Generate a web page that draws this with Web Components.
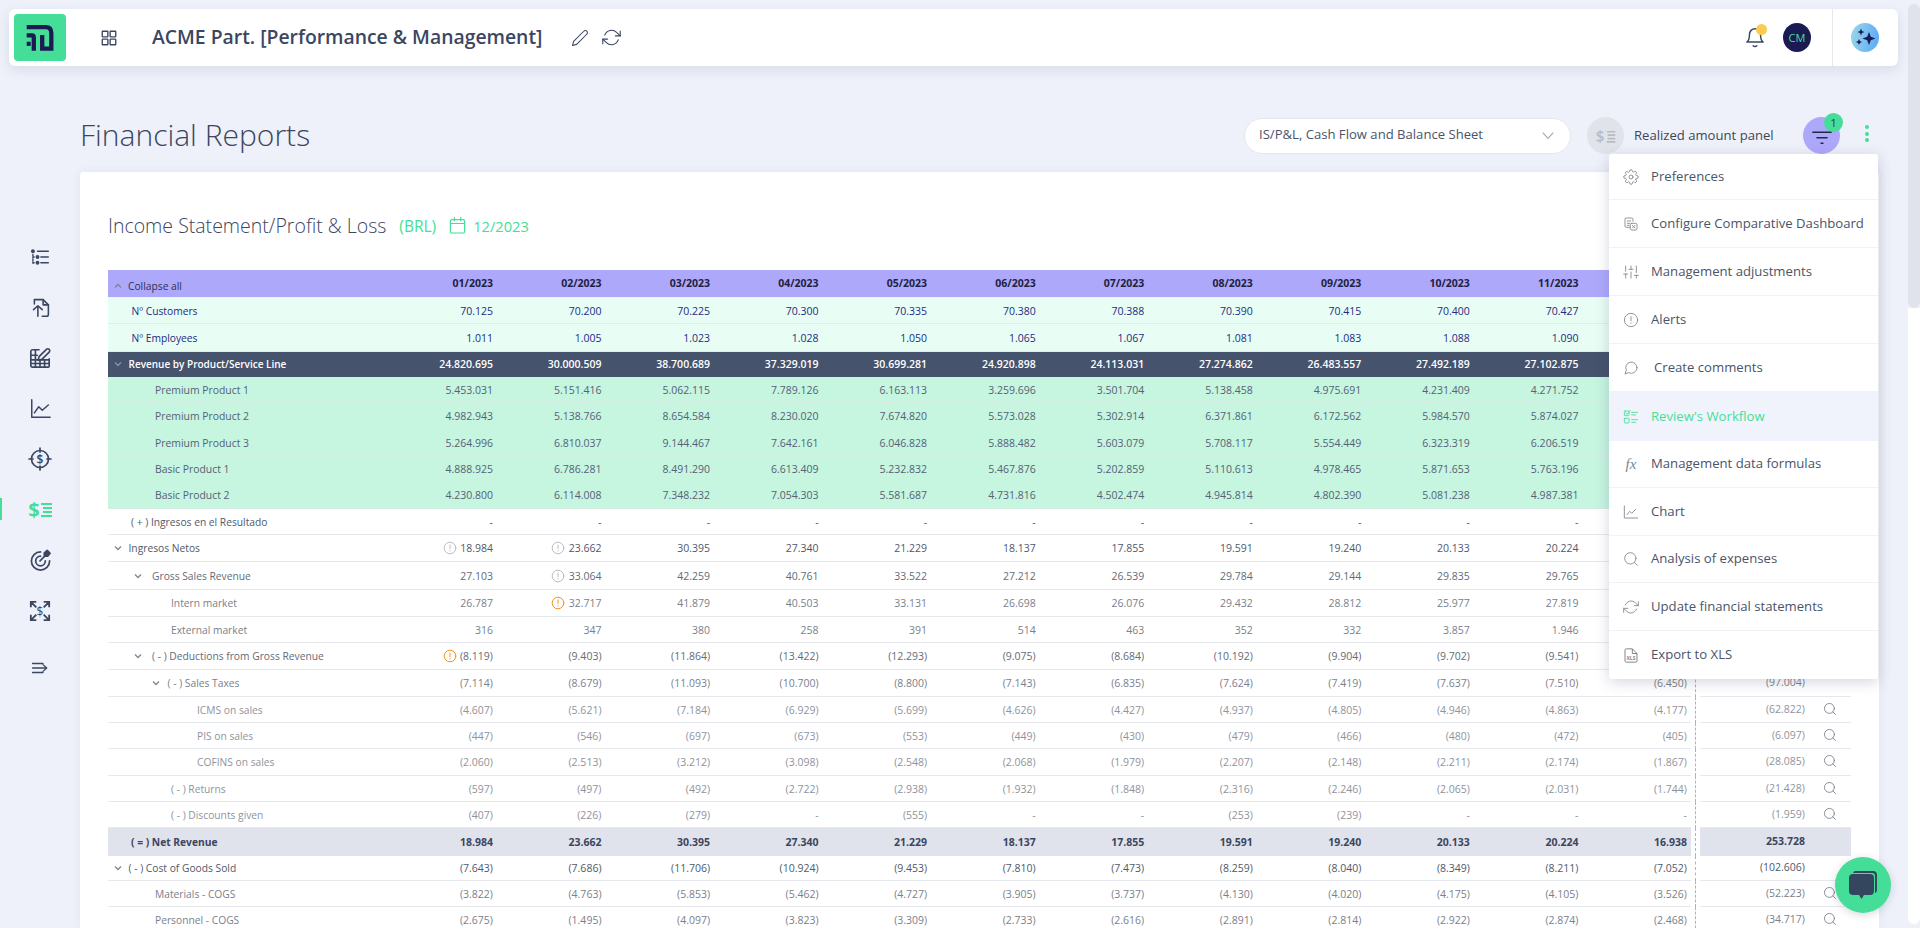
<!DOCTYPE html>
<html>
<head>
<meta charset="utf-8">
<title>Financial Reports</title>
<style>
  html, body { margin: 0; height: 100%; overflow: hidden; }
  body { background: #eef1f9; display: flex; font-family: "Open Sans", "Noto Sans", sans-serif; color: #3b4660; }
  #wrap { flex: 1; min-width: 0; display: flex; flex-direction: column; }
  #below { flex: 1; display: flex; min-height: 0; }
</style>
</head>
<body>
<div id="wrap">
  <app-header title-text="ACME Part. [Performance &amp; Management]"></app-header>
  <div id="below">
    <side-nav></side-nav>
    <report-page></report-page>
  </div>
</div>
<fake-scrollbar></fake-scrollbar>
<chat-fab></chat-fab>

<script>
const ICONS = {
    grid: '<rect x="3" y="3" width="7.5" height="7.5" rx=".8"/><rect x="13.5" y="3" width="7.5" height="7.5" rx=".8"/><rect x="3" y="13.5" width="7.5" height="7.5" rx=".8"/><rect x="13.5" y="13.5" width="7.5" height="7.5" rx=".8"/>',
    pencil: '<path d="M17 3a2.83 2.83 0 1 1 4 4L7.5 20.5 2 22l1.5-5.5L17 3z"/>',
    refresh: '<path d="M23 4v6h-6M1 20v-6h6"/><path d="M3.5 9a9 9 0 0 1 14.9-3.4L23 10M1 14l4.6 4.4A9 9 0 0 0 20.5 15"/>',
    bell: '<path d="M18 9A6 6 0 0 0 6 9c0 7-3 8.500-3 8.500h18s-3-1.500-3-8.500"/><path d="M10 21.500c1 1.200 3 1.200 4 0"/>',
    gear: '<circle cx="12" cy="12" r="3"/><path d="M19.4 15a1.65 1.65 0 0 0 .33 1.82l.06.06a2 2 0 0 1-2.83 2.83l-.06-.06a1.65 1.65 0 0 0-2.82 1.18V21a2 2 0 0 1-4 0v-.09a1.65 1.65 0 0 0-2.82-1.18l-.06.06a2 2 0 0 1-2.83-2.83l.06-.06A1.65 1.65 0 0 0 3.09 14H3a2 2 0 0 1 0-4h.09a1.65 1.65 0 0 0 1.18-2.82l-.06-.06a2 2 0 0 1 2.83-2.83l.06.06A1.65 1.65 0 0 0 10 3.09V3a2 2 0 0 1 4 0v.09a1.65 1.65 0 0 0 2.82 1.18l.06-.06a2 2 0 0 1 2.83 2.83l-.06.06A1.65 1.65 0 0 0 20.91 10H21a2 2 0 0 1 0 4h-.09a1.65 1.65 0 0 0-1.51 1z"/>',
    compare: '<path d="M15 8V5a2 2 0 0 0-2-2H5a2 2 0 0 0-2 2v10a2 2 0 0 0 2 2h5"/><path d="M6.500 7.500h5M6.500 11h3.500M6.500 14h2.500"/><rect x="11" y="11" width="10" height="10" rx="2"/><path d="M14 14l4 4M18 14l-4 4"/>',
    sliders: '<path d="M4 21v-6M4 11V3M12 21v-9M12 8V3M20 21v-4M20 13V3M1 15h6M9 8h6M17 17h6"/>',
    alert: '<circle cx="12" cy="12" r="10"/><path d="M12 7v6"/><path d="M12 16.500v.5"/>',
    comment: '<path d="M21 11.500a8.400 8.400 0 0 1-12.300 7.400L3 21l2.100-5.700A8.400 8.400 0 1 1 21 11.500z"/>',
    workflow: '<rect x="2" y="3" width="7" height="7" rx="1"/><rect x="2" y="14" width="7" height="7" rx="1"/><path d="M4 6l2 2 5-6M13 5h9M13 9h6M13 16h9M13 20h6"/>',
    chart: '<path d="M2 3v18h20"/><path d="M6 16l4-5 3 3 6-6"/>',
    search: '<circle cx="11" cy="11" r="8.500"/><path d="M21.500 21.500l-4.500-4.500"/>',
    tree: '<path d="M9 5h13M13 12h9M13 19h9"/><circle cx="3.500" cy="5" r="1.500" fill="currentColor"/><circle cx="9" cy="12" r="1.500" fill="currentColor"/><circle cx="9" cy="19" r="1.500" fill="currentColor"/><path d="M3.500 9v11M3.500 12h2M3.500 19h2" stroke-dasharray="1.500 1.500"/>',
    upload: '<path d="M5 8V3h10l6 6v11a2 2 0 0 1-2 2h-5"/><path d="M15 3v6h6"/><path d="M9 22V10M4 14.500L9 10l5 4.500"/>',
    sheet: '<path d="M11 3H4a2 2 0 0 0-2 2v15a2 2 0 0 0 2 2h17a1 1 0 0 0 1-1v-8"/><path d="M2 9h7M2 14h20M2 18h20M7 3v19M12 14v8M17 14v8"/><path d="M19 2.500a2 2 0 0 1 3 3l-8 8-4 1 1-4 8-8z"/>',
    linechart: '<path d="M2 2v20h21"/><path d="M5 17l5-7 4 4 7-6"/>',
    export: '<path d="M14 2H5a2 2 0 0 0-2 2v16a2 2 0 0 0 2 2h14a2 2 0 0 0 2-2V9l-7-7z"/><path d="M14 2v7h7"/>',
    target: '<circle cx="12" cy="12" r="8.500"/><path d="M12 1v4M12 19v4M1 12h4M19 12h4"/>',
    dart: '<path d="M12 3a9.500 9.500 0 1 0 9.500 9.500"/><path d="M12 7.500a5 5 0 1 0 5 5"/><path d="M11.500 12.500L18 6"/><path d="M16 4l3-2.500 3 3-2.500 3H16z" fill="currentColor"/>',
    expand: '<path d="M2 2l6 6M2 8V2h6M22 2l-6 6M22 8V2h-6M2 22l6-6M2 16v6h6M22 22l-6-6M22 16v6h-6"/>',
    collapse: '<path d="M2 6h14M2 12h18M2 18h14"/><path d="M16 7.500l5 4.500-5 4.500"/>',
    cal: '<rect x="3" y="4.500" width="18" height="17" rx="2"/><path d="M3 9.500h18M8 2v4M16 2v4"/>'
};

function icon(name, size, sw) {
    return `<svg width="${size}" height="${size}" viewBox="0 0 24 24" fill="none" stroke="currentColor" stroke-width="${sw || 1.5}" stroke-linecap="round" stroke-linejoin="round">${ICONS[name]}</svg>`;
}

class AppHeader extends HTMLElement {
    connectedCallback() {
        this.attachShadow({ mode: 'open' });
        this.shadowRoot.innerHTML = `
  <style>
    :host { display: flex; align-items: center; height: 57px; margin: 9px 9px 0; background: #fff; border-radius: 6px; box-shadow: 0 4px 12px rgba(60, 70, 110, 0.12); position: relative; z-index: 2; flex: none; color: #3b4660; }
    svg { display: block; }
    .logo { width: 52px; height: 47px; margin-left: 5px; background: #45de98; border-radius: 4px; flex: none; }
    .grid { margin-left: 34px; }
    h1 { margin: 0 0 2px 34px; font: 600 19.350px "Open Sans", sans-serif; color: #3b4660; white-space: nowrap; }
    .pencil { margin-left: 29px; }
    .sync { margin-left: 13px; }
    .right { margin-left: auto; display: flex; align-items: center; height: 100%; }
    .bell { position: relative; width: 22px; height: 24px; }
    .bell i { position: absolute; left: 12px; top: -2px; width: 11px; height: 11px; border-radius: 50%; background: #fdc94f; }
    .av { width: 28px; height: 29px; border-radius: 50%; background: #1c1a52; color: #45de98; font: 11px "Open Sans", sans-serif; display: flex; align-items: center; justify-content: center; margin-left: 17px; }
    .sep { width: 1px; height: 100%; background: #e6e8ee; margin-left: 21px; }
    .spark { width: 28px; height: 29px; border-radius: 50%; background: linear-gradient(100deg, #9bd8e6, #5aa7fa); margin: 0 19px 0 18px; }
  </style>
  <div class="logo">
    <svg width="52" height="47" viewBox="0 0 52 47" fill="none" stroke="#1c1a52" stroke-width="4.300">
      <path d="M12.700 13.200H32Q37.300 13.200 37.300 19V34.700H28.200V21"/>
      <path d="M12.700 21.300H18Q19.800 21.300 19.800 23.500V36.700"/>
      <path d="M12.700 29.800H16.700" stroke-width="4.200"/>
    </svg>
  </div>
  <div class="grid">${icon('grid', 18, 1.8)}</div>
  <h1>${this.getAttribute('title-text').replace('&', '&amp;')}</h1>
  <div class="pencil">${icon('pencil', 18, 1.4)}</div>
  <div class="sync">${icon('refresh', 19, 1.4)}</div>
  <div class="right">
    <div class="bell">${icon('bell', 22, 1.6)}<i></i></div>
    <div class="av">CM</div>
    <div class="sep"></div>
    <div class="spark">
      <svg width="28" height="29" viewBox="0 0 28 29" fill="#1c1a52"><path d="M18 9l1.800 4.700 4.700 1.800-4.700 1.800-1.800 4.700-1.800-4.700-4.700-1.800 4.700-1.800zM10 5.500l1 2.500 2.500 1-2.500 1-1 2.500-1-2.500-2.500-1 2.500-1zM8 16l.9 2.100 2.100.9-2.100.9-.9 2.100-.9-2.100-2.100-.9 2.100-.9z"/></svg>
    </div>
  </div>`;
    }
}
customElements.define('app-header', AppHeader);

class SideNav extends HTMLElement {
    connectedCallback() {
        this.attachShadow({ mode: 'open' });
        const money = `<span class="money">$</span><svg width="11" height="16" viewBox="0 0 11 16" fill="none" stroke="currentColor" stroke-width="2"><path d="M0 2h11M2 6h9M2 10h9M0 14h11"/></svg>`;
        const dollarTarget = `<svg width="24" height="24" viewBox="0 0 24 24" fill="none" stroke="currentColor" stroke-width="1.700" stroke-linecap="round">${ICONS.target}<text x="12" y="16.500" text-anchor="middle" font-family="Open Sans" font-size="12" font-weight="600" fill="currentColor" stroke="none">$</text></svg>`;
        const dollarExpand = `<svg width="22" height="22" viewBox="0 0 24 24" fill="none" stroke="currentColor" stroke-width="2">${ICONS.expand}<text x="12" y="17" text-anchor="middle" font-family="Open Sans" font-size="13" fill="currentColor" stroke="none">$</text></svg>`;
        this.shadowRoot.innerHTML = `
  <style>
    :host { display: flex; flex-direction: column; width: 80px; flex: none; padding-top: 165.500px; box-sizing: border-box; color: #3b4660; }
    .it { height: 50.600px; display: flex; align-items: center; justify-content: center; position: relative; flex: none; }
    .it.on { color: #45de98; gap: 1px; }
    .it.on::before { content: ""; position: absolute; left: 0; top: 14px; width: 2px; height: 22px; background: #45de98; }
    .it.last { margin-top: 6px; }
    .money { font: 700 20px/24px "Open Sans", sans-serif; }
    svg { display: block; }
  </style>
  <div class="it">${icon('tree', 20, 1.700)}</div>
  <div class="it">${icon('upload', 21, 1.800)}</div>
  <div class="it">${icon('sheet', 22, 1.800)}</div>
  <div class="it">${icon('linechart', 21, 1.700)}</div>
  <div class="it">${dollarTarget}</div>
  <div class="it on">${money}</div>
  <div class="it">${icon('dart', 23, 1.800)}</div>
  <div class="it">${dollarExpand}</div>
  <div class="it last">${icon('collapse', 18, 1.700)}</div>`;
    }
}
customElements.define('side-nav', SideNav);

class MoreMenu extends HTMLElement {
    connectedCallback() {
        this.attachShadow({ mode: 'open' });
        const fx = '<span class="fx">fx</span>';
        const xls = `<svg width="17" height="17" viewBox="0 0 24 24" fill="none" stroke="currentColor" stroke-width="1.500">${ICONS.export}<text x="12" y="18" text-anchor="middle" font-family="Open Sans" font-size="7.500" font-weight="700" fill="currentColor" stroke="none">XLS</text></svg>`;
        const items = [
            ['gear', 'Preferences', 46], ['compare', 'Configure Comparative Dashboard', 48], ['sliders', 'Management adjustments', 48],
            ['alert', 'Alerts', 48], ['comment', 'Create comments', 48], ['workflow', "Review's Workflow", 49],
            [fx, 'Management data formulas', 47], ['chart', 'Chart', 48], ['search', 'Analysis of expenses', 47],
            ['refresh', 'Update financial statements', 48], [xls, 'Export to XLS', 48]
        ];
        this.shadowRoot.innerHTML = `
  <style>
    :host { display: block; position: absolute; top: 100%; right: 1px; width: 269px; background: #fff; border-radius: 3px; box-shadow: 0 3px 14px rgba(60, 70, 110, 0.22); z-index: 5; font: 13.150px "Open Sans", sans-serif; color: #4a5469; }
    .row { display: flex; align-items: center; box-sizing: border-box; border-bottom: 1px solid #f0f2f8; padding-left: 14px; }
    .row:last-child { border-bottom: 0; }
    .row > span { padding-bottom: 2px; }
    .ic { width: 16px; height: 16px; color: #808591; display: flex; align-items: center; justify-content: center; margin-right: 12px; flex: none; }
    .on { background: #f0f3fb; color: #45de98; border-bottom: 0; }
    .on .ic { color: #45de98; }
    .shift { margin-left: 3px; }
    .fx { font: italic 15px "Liberation Serif", serif; }
    svg { display: block; }
  </style>
  ${items.map(([ic, label, h]) => `
    <div class="row${label.startsWith('Review') ? ' on' : ''}" style="height:${h}px">
      <div class="ic">${ICONS[ic] ? icon(ic, 16, 1.300) : ic}</div>
      <span class="${label === 'Create comments' ? 'shift' : ''}">${label}</span>
    </div>`).join('')}`;
    }
}
customElements.define('more-menu', MoreMenu);

class PageHead extends HTMLElement {
    connectedCallback() {
        this.attachShadow({ mode: 'open' });
        this.shadowRoot.innerHTML = `
  <style>
    :host { display: flex; align-items: center; height: 37px; margin: 51px 28px 0 0; position: relative; flex: none; color: #3b4660; }
    h2 { margin: 0 auto 2px 0; font: 300 30px "Open Sans", sans-serif; color: #3b4660; }
    .select { width: 327px; height: 36px; box-sizing: border-box; border: 1px solid #e3e6ee; border-radius: 18px; background: #fff; display: flex; align-items: center; justify-content: space-between; padding: 0 15px 2px 14px; font-size: 13.100px; color: #4a5469; }
    .select span { padding-bottom: 2px; }
    .select svg { color: #a6abb6; }
    .round { width: 37px; height: 37px; border-radius: 50%; background: #e0e3ea; color: #b6bbc6; margin-left: 16px; display: flex; align-items: center; justify-content: center; flex: none; }
    .lbl { width: 139px; margin-left: 10px; padding-bottom: 2px; font-size: 13.100px; color: #3f4656; white-space: nowrap; }
    .filter { width: 37px; height: 37px; border-radius: 50%; background: #aea8fb; margin-left: 30px; position: relative; display: flex; align-items: center; justify-content: center; color: #1f2a44; flex: none; }
    .filter b { position: absolute; right: -3px; top: -4px; width: 19px; height: 19px; border-radius: 50%; background: #45de98; color: #27415a; font: 11.500px "Open Sans", sans-serif; display: flex; align-items: center; justify-content: center; }
    .dots { width: 6px; margin: 0 9px 0 24px; display: flex; flex-direction: column; gap: 2.800px; flex: none; padding-bottom: 4px; }
    .dots i { width: 4px; height: 4px; border-radius: 50%; background: #45de98; margin: 0 auto; }
    svg { display: block; }
  </style>
  <h2>Financial Reports</h2>
  <div class="select"><span>IS/P&amp;L, Cash Flow and Balance Sheet</span>
    <svg width="14" height="14" viewBox="0 0 24 24" fill="none" stroke="currentColor" stroke-width="2"><path d="M3 8l9 10 9-10"/></svg></div>
  <div class="round"><svg width="22" height="22" viewBox="0 0 26 24" fill="none" stroke="currentColor" stroke-width="2"><path d="M14 7h10M15 11h9M15 15h9M14 19h10"/><text x="1" y="19" font-family="Open Sans" font-size="18" font-weight="600" fill="currentColor" stroke="none">$</text></svg></div>
  <div class="lbl">Realized amount panel</div>
  <div class="filter">
    <svg width="22" height="22" viewBox="0 0 24 24" fill="none" stroke="currentColor" stroke-width="1.700" stroke-linecap="round"><path d="M2 8h20M6.500 14h11M11 20h2"/></svg>
    <b>1</b>
  </div>
  <div class="dots"><i></i><i></i><i></i></div>
  <more-menu></more-menu>`;
    }
}
customElements.define('page-head', PageHead);

// kind, label, row height, text x, chevron x, values, total, magnifier
const ROWS = [
    ['kpi', 'Nº Customers', 26, 131.500, 0, '70.125 70.200 70.225 70.300 70.335 70.380 70.388 70.390 70.415 70.400 70.427'],
    ['kpi', 'Nº Employees', 28, 131.500, 0, '1.011 1.005 1.023 1.028 1.050 1.065 1.067 1.081 1.083 1.088 1.090'],
    ['dark', 'Revenue by Product/Service Line', 25, 128.500, 118, '24.820.695 30.000.509 38.700.689 37.329.019 30.699.281 24.920.898 24.113.031 27.274.862 26.483.557 27.492.189 27.102.875'],
    ['mint', 'Premium Product 1', 26, 155, 0, '5.453.031 5.151.416 5.062.115 7.789.126 6.163.113 3.259.696 3.501.704 5.138.458 4.975.691 4.231.409 4.271.752'],
    ['mint', 'Premium Product 2', 27, 155, 0, '4.982.943 5.138.766 8.654.584 8.230.020 7.674.820 5.573.028 5.302.914 6.371.861 6.172.562 5.984.570 5.874.027'],
    ['mint', 'Premium Product 3', 27, 155, 0, '5.264.996 6.810.037 9.144.467 7.642.161 6.046.828 5.888.482 5.603.079 5.708.117 5.554.449 6.323.319 6.206.519'],
    ['mint', 'Basic Product 1', 25, 155, 0, '4.888.925 6.786.281 8.491.290 6.613.409 5.232.832 5.467.876 5.202.859 5.110.613 4.978.465 5.871.653 5.763.196'],
    ['mint', 'Basic Product 2', 27, 155, 0, '4.230.800 6.114.008 7.348.232 7.054.303 5.581.687 4.731.816 4.502.474 4.945.814 4.802.390 5.081.238 4.987.381'],
    ['l1', '( + ) Ingresos en el Resultado', 26, 131, 0, '- - - - - - - - - - -'],
    ['l1', 'Ingresos Netos', 27, 128.500, 118, 'g18.984 g23.662 30.395 27.340 21.229 18.137 17.855 19.591 19.240 20.133 20.224'],
    ['l2', 'Gross Sales Revenue', 28, 152, 137.500, '27.103 g33.064 42.259 40.761 33.522 27.212 26.539 29.784 29.144 29.835 29.765'],
    ['l3', 'Intern market', 27, 171, 0, '26.787 o32.717 41.879 40.503 33.131 26.698 26.076 29.432 28.812 25.977 27.819'],
    ['l3', 'External market', 26, 171, 0, '316 347 380 258 391 514 463 352 332 3.857 1.946'],
    ['l2', '( - ) Deductions from Gross Revenue', 27, 152, 137.500, 'o(8.119) (9.403) (11.864) (13.422) (12.293) (9.075) (8.684) (10.192) (9.904) (9.702) (9.541)'],
    ['l3', '( - ) Sales Taxes', 27, 167.500, 156, '(7.114) (8.679) (11.093) (10.700) (8.800) (7.143) (6.835) (7.624) (7.419) (7.637) (7.510) (6.450)', '(97.004)'],
    ['l4', 'ICMS on sales', 26, 197, 0, '(4.607) (5.621) (7.184) (6.929) (5.699) (4.626) (4.427) (4.937) (4.805) (4.946) (4.863) (4.177)', '(62.822)', 1],
    ['l4', 'PIS on sales', 26, 197, 0, '(447) (546) (697) (673) (553) (449) (430) (479) (466) (480) (472) (405)', '(6.097)', 1],
    ['l4', 'COFINS on sales', 27, 197, 0, '(2.060) (2.513) (3.212) (3.098) (2.548) (2.068) (1.979) (2.207) (2.148) (2.211) (2.174) (1.867)', '(28.085)', 1],
    ['l4', '( - ) Returns', 26, 171, 0, '(597) (497) (492) (2.722) (2.938) (1.932) (1.848) (2.316) (2.246) (2.065) (2.031) (1.744)', '(21.428)', 1],
    ['l4', '( - ) Discounts given', 26, 171, 0, '(407) (226) (279) - (555) - - (253) (239) - - -', '(1.959)', 1],
    ['net', '( = ) Net Revenue', 28, 131, 0, '18.984 23.662 30.395 27.340 21.229 18.137 17.855 19.591 19.240 20.133 20.224 16.938', '253.728'],
    ['l1', '( - ) Cost of Goods Sold', 25, 128.500, 118, '(7.643) (7.686) (11.706) (10.924) (9.453) (7.810) (7.473) (8.259) (8.040) (8.349) (8.211) (7.052)', '(102.606)'],
    ['l3', 'Materials - COGS', 26, 155, 0, '(3.822) (4.763) (5.853) (5.462) (4.727) (3.905) (3.737) (4.130) (4.020) (4.175) (4.105) (3.526)', '(52.223)', 1],
    ['l3', 'Personnel - COGS', 26, 155, 0, '(2.675) (1.495) (4.097) (3.823) (3.309) (2.733) (2.616) (2.891) (2.814) (2.922) (2.874) (2.468)', '(34.717)', 1]
];

class ReportTable extends HTMLElement {
    connectedCallback() {
        this.attachShadow({ mode: 'open' });
        const chev = (up) => `<svg class="chev" width="10" height="10" viewBox="0 0 10 10" fill="none" stroke="currentColor" stroke-width="1.300"><path d="${up ? 'M2 6.500l3-3 3 3' : 'M2 3.500l3 3 3-3'}"/></svg>`;
        const cell = (v) => {
            if (!v) return '<div class="c n"></div>';
            const flag = v[0] === 'g' || v[0] === 'o' ? v[0] : '';
            const text = flag ? v.slice(1) : v;
            return `<div class="c n">${flag ? `<span class="warn ${flag}">${icon('alert', 14, 1.700)}</span>` : ''}<span class="v${flag ? ' w' : ''}">${text}</span></div>`;
        };
        const months = Array.from({ length: 11 }, (_, i) => String(i + 1).padStart(2, '0') + '/2023');
        const rows = ROWS.map(([kind, label, h, x, chevX, vals, total, mag]) => {
            const values = vals.split(' ');
            while (values.length < 12) values.push('');
            const lead = chevX
                ? `<span style="margin-left:${chevX - 5 - 108}px;margin-right:${x - chevX - 5}px;display:flex">${chev()}</span>`
                : `<span style="margin-left:${x - 108}px"></span>`;
            return `
      <div class="r ${kind}" style="height:${h}px">
        <div class="c lab">${lead}<span>${label}</span></div>
        ${values.map(cell).join('')}
        <div class="gap"><i></i></div>
        <div class="c tot"><span>${total || ''}</span><span class="mag">${mag ? icon('search', 14, 1.500) : ''}</span></div>
      </div>`;
        }).join('');
        this.shadowRoot.innerHTML = `
  <style>
    :host { display: block; font: 10.500px "Open Sans", sans-serif; }
    .r { display: grid; grid-template-columns: 280.400px repeat(12, 108.550px) 9px 151px; }
    .c { display: flex; align-items: center; box-sizing: border-box; border-bottom: 1px solid #e6e8ee; min-width: 0; white-space: nowrap; }
    .lab { font-size: 10.250px; }
    .mint .lab { font-size: 10.400px; }
    .dark .lab { font-size: 10px; }
    .n { justify-content: flex-end; padding-right: 4px; }
    .v.w { min-width: 36px; text-align: right; }
    .warn { display: flex; }
    .warn.g { color: #b9bcc4; }
    .warn.o { color: #f5921e; }
    .gap i { display: block; height: 100%; width: 0; margin-left: 4px; border-left: 1px dashed #aea8fb; }
    .tot { justify-content: flex-end; padding-right: 14px; padding-bottom: 2px; }
    .mag { width: 14px; margin-left: 18px; height: 14px; color: #7a7f8a; display: block; }
    svg { display: block; }
    .chev { color: #7d8392; }
    .head { height: 28px; }
    .head .c { background: #aea8fb; border-bottom: 1px solid #e8f9f2; color: #1f2240; font-weight: 700; padding-bottom: 2px; }
    .head .lab { font-weight: 400; color: #2c3150; padding: 4px 0 0 0; }
    .head .gap, .head .tot { background: #aea8fb; }
    .kpi .c { background: #e8fdf4; color: #1d2c86; border-bottom-color: #dfeee8; }
    .dark .c { background: #46536c; color: #fff; font-weight: 600; border-bottom-color: #46536c; }
    .dark .chev { color: #8a93a6; }
    .mint .c { background: #c6f5e0; color: #566176; border-bottom-color: #d4ebe2; }
    .l1 .c { color: #4f596b; }
    .l2 .c { color: #646b78; }
    .l3 .c { color: #7b808b; }
    .l4 .c { color: #8f939c; }
    .net .c { background: #e0e3eb; color: #3b4660; font-weight: 700; border-bottom-color: #e0e3eb; }
    .net .gap { background: #fff; }
  </style>
  <div class="r head">
    <div class="c lab"><span style="margin-left:5px;margin-right:5px;display:flex">${chev(true)}</span><span>Collapse all</span></div>
    ${months.map((m) => `<div class="c n">${m}</div>`).join('')}
    <div class="c n"></div>
  </div>
  ${rows}`;
    }
}
customElements.define('report-table', ReportTable);

class ReportCard extends HTMLElement {
    connectedCallback() {
        this.attachShadow({ mode: 'open' });
        this.shadowRoot.innerHTML = `
  <style>
    :host { display: block; flex: 1; min-height: 0; margin: 18px 28px 0 0; background: #fff; border-radius: 4px 4px 0 0; box-shadow: 0 0 10px rgba(60, 70, 110, 0.07); padding: 38px 0 0 28px; overflow: hidden; }
    .top { display: flex; align-items: center; height: 30px; margin-bottom: 30px; color: #45de98; }
    h3 { margin: 0 13px 0 0; font: 300 19.500px "Open Sans", sans-serif; color: #3b4660; white-space: nowrap; }
    .cur { font-size: 15.500px; margin-right: 12px; padding-top: 2px; }
    .top svg { display: block; margin-right: 6px; }
    .date { font-size: 14.700px; padding-top: 2px; }
  </style>
  <div class="top">
    <h3>Income Statement/Profit &amp; Loss</h3>
    <span class="cur">(BRL)</span>
    ${icon('cal', 19, 1.500)}
    <span class="date">12/2023</span>
  </div>
  <report-table></report-table>`;
    }
}
customElements.define('report-card', ReportCard);

class ReportPage extends HTMLElement {
    connectedCallback() {
        this.attachShadow({ mode: 'open' });
        this.shadowRoot.innerHTML = `
  <style>
    :host { flex: 1; min-width: 0; display: flex; flex-direction: column; }
  </style>
  <page-head></page-head>
  <report-card></report-card>`;
    }
}
customElements.define('report-page', ReportPage);

class FakeScrollbar extends HTMLElement {
    connectedCallback() {
        this.attachShadow({ mode: 'open' });
        this.shadowRoot.innerHTML = `
  <style>
    :host { display: flex; flex-direction: column; width: 13px; flex: none; height: 100%; box-sizing: border-box; padding: 4px 0 4px 1px; background: #eef1f9; }
    .thumb { height: 304px; background: #e0e3eb; border-radius: 6px; flex: none; }
    .track { flex: 1; background: #fff; border-radius: 0 0 6px 6px; }
  </style>
  <div class="thumb"></div>
  <div class="track"></div>`;
    }
}
customElements.define('fake-scrollbar', FakeScrollbar);

class ChatFab extends HTMLElement {
    connectedCallback() {
        this.attachShadow({ mode: 'open' });
        this.shadowRoot.innerHTML = `
  <style>
    :host { position: fixed; left: 1835px; top: 857px; width: 56px; height: 56px; border-radius: 50%; background: #45de98; box-shadow: 0 2px 8px rgba(60, 70, 110, 0.2); display: flex; align-items: center; justify-content: center; z-index: 6; }
    svg { display: block; }
  </style>
  <svg width="30" height="30" viewBox="0 0 30 30">
    <path d="M7 1h18a4 4 0 0 1 4 4v15a3 3 0 0 1-2 3V6a3 3 0 0 0-3-3H5a3 3 0 0 1 2-2z" fill="#34465e"/>
    <path d="M5 4h17a4 4 0 0 1 4 4v13a4 4 0 0 1-4 4h-6l-2.500 4-2.500-4H5a4 4 0 0 1-4-4V8a4 4 0 0 1 4-4z" fill="#34465e"/>
  </svg>`;
    }
}
customElements.define('chat-fab', ChatFab);
</script>
</body>
</html>
